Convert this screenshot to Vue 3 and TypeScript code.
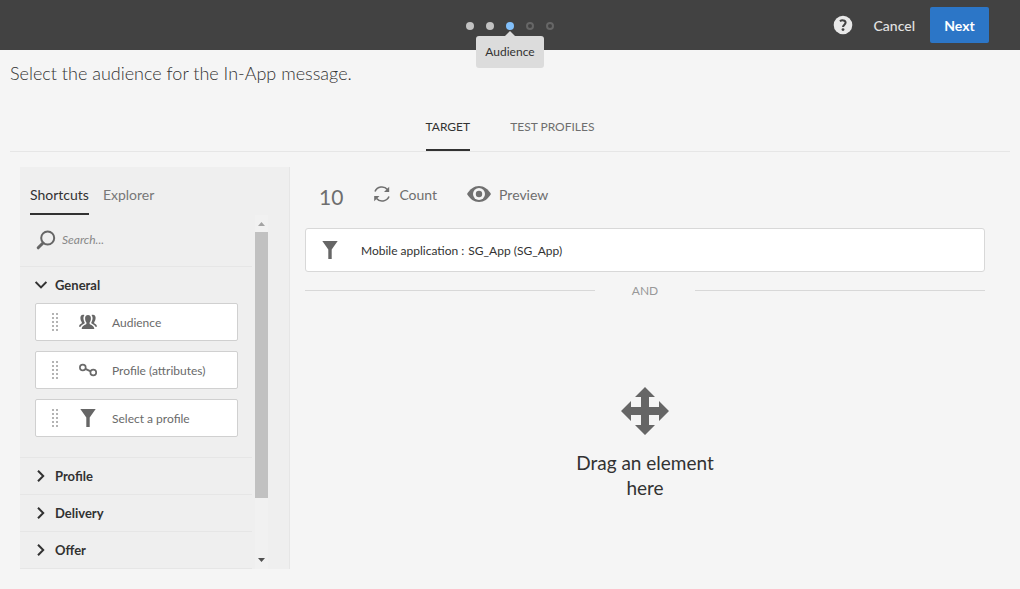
<script setup lang="ts">
import { ref } from 'vue'

const steps = ['done', 'done', 'current', 'todo', 'todo']
const tabs = ['TARGET', 'TEST PROFILES']
const activeTab = ref('TARGET')
const paletteTabs = ['Shortcuts', 'Explorer']
const activePalette = ref('Shortcuts')
const search = ref('')
const shortcuts = [
  { label: 'Audience', icon: 'people' },
  { label: 'Profile (attributes)', icon: 'link' },
  { label: 'Select a profile', icon: 'funnel' },
]
const closedGroups = ['Profile', 'Delivery', 'Offer']
</script>

<template>
  <div class="page">
    <header class="topbar">
      <div class="stepper">
        <ol class="steps">
          <li v-for="(state, i) in steps" :key="i" class="step" :class="state">
            <span v-if="state === 'current'" class="tip">Audience</span>
          </li>
        </ol>
      </div>
      <div class="actions">
        <button class="help" type="button" aria-label="Help">
          <svg width="20" height="20" viewBox="0 0 20 20">
            <circle cx="10" cy="10" r="9.3" fill="#e8e8e8" />
            <path d="M6.9 6.2C8.6 4.9 12.6 4.9 12.6 7.6C12.6 9.6 10 9.8 10 12.1" fill="none" stroke="#424242" stroke-width="2" />
            <circle cx="10" cy="14.6" r="1.4" fill="#424242" />
          </svg>
        </button>
        <button class="cancel" type="button">Cancel</button>
        <button class="next" type="button">Next</button>
      </div>
    </header>

    <h1 class="title">Select the audience for the In-App message.</h1>

    <nav class="tabs">
      <button v-for="t in tabs" :key="t" type="button" class="tab" :class="{ active: t === activeTab }" @click="activeTab = t">{{ t }}</button>
    </nav>

    <div class="workspace">
      <aside class="palette">
        <nav class="palette-tabs">
          <button v-for="t in paletteTabs" :key="t" type="button" class="palette-tab" :class="{ active: t === activePalette }" @click="activePalette = t">{{ t }}</button>
        </nav>
        <div class="scroller">
          <div class="groups">
            <label class="search">
              <svg width="20" height="20" viewBox="0 0 20 20" fill="none" stroke="#666">
                <circle cx="11.7" cy="8" r="6.5" stroke-width="2" />
                <path d="M7 13L2.2 17.8" stroke-width="3" stroke-linecap="round" />
              </svg>
              <input v-model="search" type="text" placeholder="Search..." aria-label="Search" />
            </label>
            <section class="group open">
              <button type="button" class="group-head" aria-expanded="true">
                <svg width="12" height="12" viewBox="0 0 12 12"><path d="M0.600 3L6 8.400L11.400 3" fill="none" stroke="#323232" stroke-width="2" /></svg>
                General
              </button>
              <ul class="cards">
                <li v-for="s in shortcuts" :key="s.label" class="card" draggable="true">
                  <svg class="grip" width="7" height="18" viewBox="0 0 7 18" fill="#b4b4b4">
                    <template v-for="n in 5" :key="n">
                      <rect x="0" :y="n * 4 - 4" width="2" height="2" />
                      <rect x="4" :y="n * 4 - 4" width="2" height="2" />
                    </template>
                  </svg>
                  <svg v-if="s.icon === 'people'" width="18" height="18" viewBox="0 0 18 18" fill="#666">
                    <path d="M9 2C11 2 12 3.400 11.900 5.500C11.900 7.500 11.200 8.600 10.600 9.500V11C12.500 12.200 15 12.500 15.300 16H2.700C3 12.500 5.500 12.200 7.400 11V9.500C6.800 8.600 6.100 7.500 6.100 5.500C6 3.400 7 2 9 2Z" />
                    <path d="M5.500 2C4.600 3 4.300 4.800 4.500 6.100C4.700 7.700 5.200 8.700 5.700 9.600V10.300L3 12C2.300 12.500 1.900 13 1.600 13.800H0C.100 11.700 1.300 11.100 2.800 10.200V9.100C1.800 8 1.300 6.400 1.400 4.500C1.500 2.200 3.200 1 5.500 2Z" />
                    <path d="M12.500 2C13.400 3 13.700 4.800 13.500 6.100C13.300 7.700 12.800 8.700 12.300 9.600V10.300L15 12C15.700 12.500 16.100 13 16.400 13.800H18C17.900 11.700 16.700 11.100 15.200 10.200V9.100C16.200 8 16.700 6.400 16.600 4.500C16.500 2.200 14.800 1 12.500 2Z" />
                  </svg>
                  <svg v-else-if="s.icon === 'link'" width="18" height="18" viewBox="0 0 18 18" fill="none" stroke="#6a6a6a">
                    <circle cx="3.8" cy="6.500" r="2.900" stroke-width="1.700" />
                    <circle cx="14.300" cy="11.500" r="2.900" stroke-width="1.700" />
                    <path d="M6.400 7.800L11.700 10.300" stroke-width="2" />
                  </svg>
                  <svg v-else width="18" height="18" viewBox="0 0 18 18" fill="#666"><path d="M1.300 0H16.700L10.700 8.500V18H7.300V8.500Z" /></svg>
                  <span>{{ s.label }}</span>
                </li>
              </ul>
            </section>
            <section v-for="g in closedGroups" :key="g" class="group">
              <button type="button" class="group-head" aria-expanded="false">
                <svg width="12" height="12" viewBox="0 0 12 12"><path d="M3 0.800L8.200 6L3 11.200" fill="none" stroke="#323232" stroke-width="2" /></svg>
                {{ g }}
              </button>
            </section>
          </div>
          <div class="scrollbar" aria-hidden="true">
            <svg width="13" height="17" viewBox="0 0 13 17"><path d="M3 11L6.500 7L10 11Z" fill="#a3a3a3" /></svg>
            <div class="track"><div class="thumb"></div></div>
            <svg width="13" height="16" viewBox="0 0 13 16"><path d="M3 5L6.500 9L10 5Z" fill="#505050" /></svg>
          </div>
        </div>
      </aside>

      <main class="canvas">
        <div class="toolbar">
          <span class="total">10</span>
          <button type="button" class="tool count">
            <svg width="18" height="18" viewBox="0 0 18 18" fill="none" stroke="#707070" stroke-width="1.600">
              <path d="M2 6.500C4.200 1.400 11 .4 14.400 4.500" />
              <path d="M16 11.500C13.800 16.600 7 17.600 3.600 13.500" />
              <path d="M16.200 1.800V6.900H11Z" fill="#707070" stroke="none" />
              <path d="M1.200 16.200V11H6.500Z" fill="#707070" stroke="none" />
            </svg>
            Count
          </button>
          <button type="button" class="tool">
            <svg width="24" height="18" viewBox="0 0 24 18">
              <path fill="#707070" d="M0 9C3 4 7 1 12 1S21 4 24 9C21 14 17 17 12 17S3 14 0 9Z" />
              <circle cx="12" cy="9" r="6" fill="#f5f5f5" />
              <circle cx="12" cy="9" r="3.200" fill="#707070" />
            </svg>
            Preview
          </button>
        </div>

        <div class="rule">
          <svg width="18" height="18" viewBox="0 0 18 18" fill="#666"><path d="M1.300 0H16.700L10.700 8.500V18H7.300V8.500Z" /></svg>
          <span>Mobile application :</span>
          <span>SG_App (SG_App)</span>
        </div>

        <div class="operator">AND</div>

        <div class="drop">
          <svg width="48" height="48" viewBox="0 0 48 48" fill="#666">
            <path d="M24 0L34 10H28V20H38V14L48 24L38 34V28H28V38H34L24 48L14 38H20V28H10V34L0 24L10 14V20H20V10H14Z" />
          </svg>
          <p>Drag an element here</p>
        </div>
      </main>
    </div>
  </div>
</template>

<style>
body {
  margin: 0;
  background: #f5f5f5;
}
</style>

<style scoped>
.page {
  min-height: 100vh;
  box-sizing: border-box;
  background: #f5f5f5;
  color: #323232;
  font-family: Lato, "Open Sans", sans-serif;
  font-size: 12px;
}
button {
  border: 0;
  padding: 0;
  background: none;
  font: inherit;
  color: inherit;
  cursor: pointer;
}
svg {
  display: block;
  flex: none;
}
ol, ul {
  margin: 0;
  padding: 0;
  list-style: none;
}
.topbar {
  display: grid;
  grid-template-columns: 1fr auto 1fr;
  align-items: center;
  height: 50px;
  background: #424242;
}
.stepper {
  grid-column: 2;
}
.steps {
  display: flex;
  gap: 12px;
  padding-top: 2px;
}
.step {
  position: relative;
  box-sizing: border-box;
  width: 8px;
  height: 8px;
  border-radius: 50%;
  background: #c2c2c2;
}
.step.current {
  background: #82c0fb;
}
.step.todo {
  background: none;
  border: 2px solid #666;
}
.tip {
  position: absolute;
  top: 14px;
  left: 50%;
  width: 68px;
  transform: translateX(-50%);
  border-radius: 3px;
  background: #dcdcdc;
  line-height: 32px;
  text-align: center;
}
.tip::before {
  content: "";
  position: absolute;
  bottom: 100%;
  left: 50%;
  transform: translateX(-50%);
  border: 5px solid transparent;
  border-top: 0;
  border-bottom-color: #dcdcdc;
}
.actions {
  grid-column: 3;
  justify-self: end;
  display: flex;
  align-items: center;
  padding-right: 31px;
  color: #e3e3e3;
  font-size: 14px;
  font-weight: 500;
}
.cancel {
  margin: 0 15px 0 21px;
}
.next {
  width: 59px;
  height: 36px;
  border-radius: 2px;
  background: #2c76c7;
  color: #fff;
  font-weight: 700;
}
.title {
  margin: 11px 10px 0;
  font-size: 18px;
  line-height: 24px;
  font-weight: 300;
}
.tabs {
  display: flex;
  justify-content: center;
  gap: 40px;
  margin: 17px 10px 0;
  border-bottom: 1px solid #e6e6e6;
}
.tab {
  height: 49px;
  padding-top: 2px;
  border-bottom: 2px solid transparent;
  color: #6e6e6e;
}
.tab.active {
  border-color: #323232;
  color: #323232;
}
.workspace {
  display: flex;
  gap: 15px;
  padding: 15px 35px 20px 20px;
}
.palette {
  flex: none;
  box-sizing: border-box;
  width: 270px;
  border-right: 1px solid #e6e6e6;
  background: #efefef;
}
.palette-tabs {
  display: flex;
  gap: 14px;
  padding-left: 10px;
  font-size: 14px;
}
.palette-tab {
  height: 48px;
  padding-top: 8px;
  border-bottom: 2px solid transparent;
  color: #777;
}
.palette-tab.active {
  border-color: #323232;
  color: #323232;
}
.scroller {
  display: flex;
  gap: 3px;
  padding-right: 21px;
}
.groups {
  flex: 1;
  min-width: 0;
}
.search {
  display: flex;
  align-items: center;
  box-sizing: border-box;
  gap: 6px;
  height: 51px;
  padding: 0 0 2px 16px;
}
.search input {
  flex: 1;
  min-width: 0;
  border: 0;
  padding: 0;
  outline: 0;
  background: none;
  font: inherit;
  font-style: italic;
  color: #323232;
}
.search input::placeholder {
  color: #888;
}
.group {
  border-top: 1px solid #e6e6e6;
}
.group:last-child {
  border-bottom: 1px solid #e6e6e6;
}
.group-head {
  display: flex;
  align-items: center;
  gap: 8px;
  width: 100%;
  height: 36px;
  padding-left: 15px;
  font-size: 13px;
  font-weight: 700;
}
.cards {
  display: flex;
  flex-direction: column;
  gap: 10px;
  padding: 0 14px 20px 15px;
}
.card {
  display: flex;
  align-items: center;
  box-sizing: border-box;
  height: 38px;
  padding-left: 16px;
  border: 1px solid #d0d0d0;
  border-radius: 2px;
  background: #fff;
  color: #6a6a6a;
}
.grip {
  margin-right: 20px;
}
.card span {
  margin-left: 15px;
}
.scrollbar {
  display: flex;
  flex-direction: column;
  width: 13px;
  background: #f1f1f1;
}
.track {
  flex: 1;
}
.thumb {
  height: 83%;
  background: #c1c1c1;
}
.canvas {
  flex: 1;
  min-width: 0;
}
.toolbar {
  display: flex;
  align-items: center;
  box-sizing: border-box;
  height: 61px;
  padding: 0 14px 2px;
  color: #6e6e6e;
}
.total {
  font-size: 21px;
}
.tool {
  display: flex;
  align-items: center;
  gap: 8px;
  margin: 0 0 5px 30px;
  font-size: 14px;
}
.rule {
  display: flex;
  align-items: center;
  box-sizing: border-box;
  height: 44px;
  padding-left: 15px;
  border: 1px solid #d8d8d8;
  border-radius: 3px;
  background: #fff;
}
.rule svg {
  margin-right: 22px;
}
.rule span {
  margin-right: 4px;
}
.operator {
  display: grid;
  grid-template-columns: 1fr 100px 1fr;
  align-items: center;
  height: 37px;
  text-align: center;
  color: #999;
}
.operator::before,
.operator::after {
  content: "";
  height: 1px;
  background: #d8d8d8;
}
.drop {
  display: flex;
  flex-direction: column;
  align-items: center;
  padding-top: 78px;
}
.drop p {
  width: 150px;
  margin: 15px 0 0;
  font-size: 19px;
  line-height: 25px;
  text-align: center;
}
</style>
